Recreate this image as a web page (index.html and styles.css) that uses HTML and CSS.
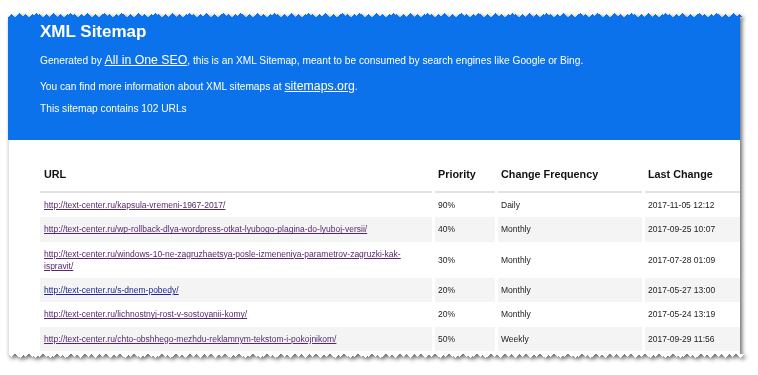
FILE: index.html
```html
<!DOCTYPE html>
<html lang="en">
<head>
<meta charset="utf-8">
<title>XML Sitemap</title>
<link rel="stylesheet" href="styles.css">
</head>
<body>
<div class="frame">
  <div class="sheet">
    <header class="hero">
      <h1 class="hero-title">XML Sitemap</h1>
      <p class="hero-text hero-text-first">Generated by <a class="hero-link" href="#">All in One SEO</a>, this is an XML Sitemap, meant to be consumed by search engines like Google or Bing.</p>
      <p class="hero-text hero-text-second">You can find more information about XML sitemaps at <a class="hero-link" href="#">sitemaps.org</a>.</p>
      <p class="hero-text hero-text-third">This sitemap contains 102 URLs</p>
    </header>
    <main class="content">
      <table class="sitemap">
        <colgroup>
          <col class="col-url">
          <col class="col-priority">
          <col class="col-freq">
          <col class="col-date">
        </colgroup>
        <thead>
          <tr>
            <th class="cell-url">URL</th>
            <th>Priority</th>
            <th>Change Frequency</th>
            <th>Last Change</th>
          </tr>
        </thead>
        <tbody>
          <tr>
            <td class="cell-url"><a class="url visited" href="#">http://text-center.ru/kapsula-vremeni-1967-2017/</a></td>
            <td>90%</td>
            <td>Daily</td>
            <td>2017-11-05 12:12</td>
          </tr>
          <tr>
            <td class="cell-url"><a class="url visited" href="#">http://text-center.ru/wp-rollback-dlya-wordpress-otkat-lyubogo-plagina-do-lyuboj-versii/</a></td>
            <td>40%</td>
            <td>Monthly</td>
            <td>2017-09-25 10:07</td>
          </tr>
          <tr>
            <td class="cell-url"><a class="url visited" href="#">http://text-center.ru/windows-10-ne-zagruzhaetsya-posle-izmeneniya-parametrov-zagruzki-kak-ispravit/</a></td>
            <td>30%</td>
            <td>Monthly</td>
            <td>2017-07-28 01:09</td>
          </tr>
          <tr>
            <td class="cell-url"><a class="url fresh" href="#">http://text-center.ru/s-dnem-pobedy/</a></td>
            <td>20%</td>
            <td>Monthly</td>
            <td>2017-05-27 13:00</td>
          </tr>
          <tr>
            <td class="cell-url"><a class="url visited" href="#">http://text-center.ru/lichnostnyj-rost-v-sostoyanii-komy/</a></td>
            <td>20%</td>
            <td>Monthly</td>
            <td>2017-05-24 13:19</td>
          </tr>
          <tr>
            <td class="cell-url"><a class="url visited" href="#">http://text-center.ru/chto-obshhego-mezhdu-reklamnym-tekstom-i-pokojnikom/</a></td>
            <td>50%</td>
            <td>Weekly</td>
            <td>2017-09-29 11:56</td>
          </tr>
        </tbody>
      </table>
    </main>
  </div>
</div>
</body>
</html>
```

FILE: styles.css
```css
html, body {
  margin: 0;
  padding: 0;
  background: #ffffff;
}

body {
  font-family: "Liberation Sans", Arial, sans-serif;
  width: 758px;
  height: 375px;
  overflow: hidden;
}

.frame {
  margin: 13px 0 0 8px;
  width: 736px;
  height: 345px;
  filter: drop-shadow(2px 2px 2px rgba(0, 0, 0, 0.6));
}

.sheet {
  width: 100%;
  height: 100%;
  overflow: hidden;
  background: #ffffff;
  display: flex;
  flex-direction: column;
  -webkit-mask:
    conic-gradient(from 135deg at 50% 0, #000 90deg, #0000 0) 0 1px / 7px 3px repeat-x,
    conic-gradient(from 135deg at 50% 0, #000 90deg, #0000 0) 3px 0 / 17px 4px repeat-x,
    conic-gradient(from -45deg at 50% 100%, #000 90deg, #0000 0) 0 calc(100% - 1px) / 7px 3px repeat-x,
    conic-gradient(from -45deg at 50% 100%, #000 90deg, #0000 0) 5px 100% / 15px 4px repeat-x,
    conic-gradient(from 45deg at 100% 50%, #000 90deg, #0000 0) calc(100% - 1px) 0 / 3px 6px repeat-y,
    conic-gradient(from 45deg at 100% 50%, #000 90deg, #0000 0) 100% 2px / 4px 13px repeat-y,
    linear-gradient(#000 0 0) 0 4px / calc(100% - 4px) calc(100% - 8px) no-repeat;
  mask:
    conic-gradient(from 135deg at 50% 0, #000 90deg, #0000 0) 0 1px / 7px 3px repeat-x,
    conic-gradient(from 135deg at 50% 0, #000 90deg, #0000 0) 3px 0 / 17px 4px repeat-x,
    conic-gradient(from -45deg at 50% 100%, #000 90deg, #0000 0) 0 calc(100% - 1px) / 7px 3px repeat-x,
    conic-gradient(from -45deg at 50% 100%, #000 90deg, #0000 0) 5px 100% / 15px 4px repeat-x,
    conic-gradient(from 45deg at 100% 50%, #000 90deg, #0000 0) calc(100% - 1px) 0 / 3px 6px repeat-y,
    conic-gradient(from 45deg at 100% 50%, #000 90deg, #0000 0) 100% 2px / 4px 13px repeat-y,
    linear-gradient(#000 0 0) 0 4px / calc(100% - 4px) calc(100% - 8px) no-repeat;
}

.hero {
  flex: none;
  box-sizing: border-box;
  height: 127px;
  padding: 8.5px 0 0 32px;
  background: #0b72eb;
  color: #ffffff;
}

.hero-title {
  margin: 0;
  font-size: 17px;
  line-height: 20px;
  font-weight: bold;
}

.hero-text {
  margin: 0;
  font-size: 10.2px;
  line-height: 14px;
}

.hero-text-first {
  margin-top: 11.5px;
}

.hero-text-second {
  margin-top: 10.5px;
}

.hero-text-third {
  margin-top: 8.5px;
}

.hero-link {
  color: #ffffff;
  font-size: 12.3px;
  text-decoration: underline;
}

.content {
  flex: 1;
  border-left: 1px solid #e3e3e3;
  padding: 17px 0 0 28px;
}

.sitemap {
  table-layout: fixed;
  width: 731px;
  border-collapse: separate;
  border-spacing: 3px 0;
}

.col-url { width: 392px; }
.col-priority { width: 60px; }
.col-freq { width: 144px; }
.col-date { width: 120px; }

.sitemap th {
  text-align: left;
  font-size: 10.8px;
  line-height: 14px;
  font-weight: bold;
  color: #111111;
  padding: 10px 3px 10px 3px;
  border-bottom: 2px solid #e2e2e2;
}

.sitemap td {
  font-size: 8.5px;
  line-height: 12.3px;
  color: #222222;
  padding: 6px 3px;
  vertical-align: middle;
}

.sitemap .cell-url {
  padding-left: 4px;
}

.sitemap tbody tr:nth-child(even) td {
  background: #f4f4f4;
}

.url {
  text-decoration: underline;
}

.url.visited {
  color: #56286b;
}

.url.fresh {
  color: #1f2596;
}
```
